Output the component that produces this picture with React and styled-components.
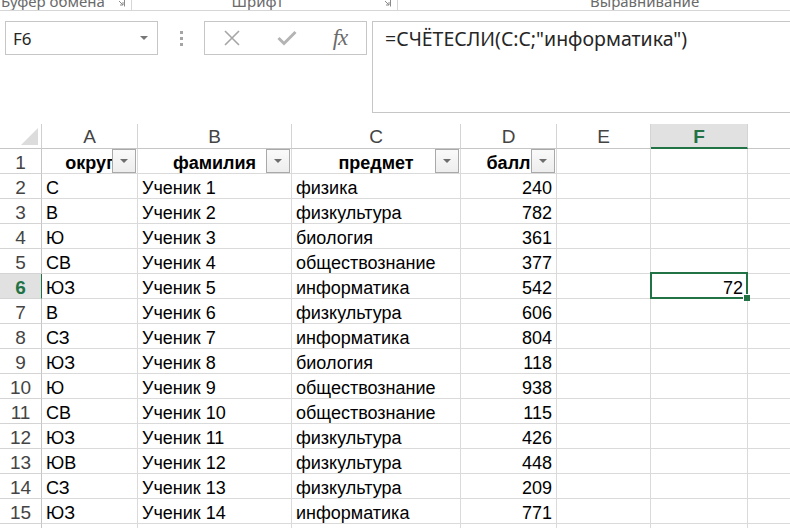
import React from 'react';
import styled, { createGlobalStyle } from 'styled-components';

const GlobalStyle = createGlobalStyle`
  html, body {
    margin: 0;
    padding: 0;
    background: #fff;
  }
  body {
    font-family: "Liberation Sans", Arial, sans-serif;
  }
`;

const Page = styled.div`
  width: 790px;
  height: 528px;
  overflow: hidden;
  background: #fff;
`;

// ribbon group captions, cut off at the top
const Ribbon = styled.div`
  display: flex;
  height: 10px;
  border-bottom: 1px solid #d6d6d6;
  overflow: hidden;
`;

const RibbonGroup = styled.div`
  position: relative;
  width: ${p => p.w}px;
  flex: none;
  display: flex;
  justify-content: ${p => p.align || 'center'};
  padding: ${p => p.pad || '0 14px 0 0'};
  box-sizing: border-box;
  border-right: ${p => (p.last ? 'none' : '1px solid #d6d6d6')};
`;

const RibbonLabel = styled.span`
  margin-top: -8px;
  font-family: "Noto Sans", "Open Sans", sans-serif;
  font-size: 15px;
  line-height: 18px;
  color: #6a6a6a;
  white-space: nowrap;
`;

const Launcher = styled.svg`
  position: absolute;
  right: 6px;
  top: -2px;
`;

const FormulaBar = styled.div`
  display: flex;
  align-items: flex-start;
  height: 102px;
  padding-top: 10px;
  box-sizing: border-box;
`;

const NameBox = styled.div`
  margin-left: 5px;
  width: 153px;
  height: 34px;
  box-sizing: border-box;
  border: 1px solid #c6c6c6;
  display: flex;
  align-items: center;
  justify-content: space-between;
  padding: 0 9px 0 7px;
  font-family: "Noto Sans", "Open Sans", sans-serif;
  font-size: 17px;
  color: #262626;
`;

const Caret = styled.span`
  width: 0;
  height: 0;
  border-left: 4px solid transparent;
  border-right: 4px solid transparent;
  border-top: 4px solid #777;
`;

const Grip = styled.div`
  width: 3px;
  margin: 10px 21px 0 22px;
  display: flex;
  flex-direction: column;
  gap: 3px;
  height: 15px;
  span {
    width: 3px;
    height: 3px;
    background: #a5a5a5;
  }
`;

const ActionBox = styled.div`
  width: 163px;
  height: 34px;
  box-sizing: border-box;
  border: 1px solid #c6c6c6;
  display: flex;
  align-items: center;
  padding-left: 8px;
`;

const ActionSlot = styled.div`
  width: ${p => p.w}px;
  flex: none;
  display: flex;
  align-items: center;
  justify-content: center;
`;

const Fx = styled.span`
  font-family: "Liberation Serif", "Times New Roman", serif;
  font-style: italic;
  font-size: 23px;
  color: #6b6b6b;
  letter-spacing: -1px;
`;

const FormulaInput = styled.div`
  margin-left: 5px;
  flex: 1;
  height: 92px;
  box-sizing: border-box;
  border-left: 1px solid #c6c6c6;
  border-top: 1px solid #c6c6c6;
  border-bottom: 1px solid #c6c6c6;
  padding: 4px 0 0 12px;
  font-family: "Noto Sans", "Open Sans", sans-serif;
  font-size: 19.5px;
  line-height: 26px;
  color: #262626;
  white-space: nowrap;
`;

const Sheet = styled.div`
  margin-top: 11px;
  display: grid;
  grid-template-columns: 42px 96px 154px 169px 96px 94px 97px 120px;
  grid-template-rows: 25px;
  grid-auto-rows: 25px;
  font-size: 18px;
  color: #000;
`;

const Corner = styled.div`
  position: relative;
  border-right: 1px solid #d0d0d0;
  border-bottom: 1px solid #c6c6c6;
  &::after {
    content: '';
    position: absolute;
    right: 3px;
    bottom: 3px;
    width: 0;
    height: 0;
    border-left: 17px solid transparent;
    border-bottom: 17px solid #dcdcdc;
  }
`;

const ColHead = styled.div`
  display: flex;
  align-items: center;
  justify-content: center;
  border-right: 1px solid #d4d4d4;
  border-bottom: ${p => (p.active ? '2px solid #217346' : '1px solid #c6c6c6')};
  background: ${p => (p.active ? '#e1e1e1' : '#fff')};
  color: ${p => (p.active ? '#217346' : '#444')};
  font-weight: ${p => (p.active ? 'bold' : 'normal')};
  font-size: 19px;
  padding-top: 2px;
  box-sizing: border-box;
`;

const RowHead = styled.div`
  display: flex;
  align-items: center;
  justify-content: center;
  padding-top: 4px;
  border-right: 1px solid ${p => (p.active ? '#217346' : '#c6c6c6')};
  border-bottom: 1px solid #d4d4d4;
  background: ${p => (p.active ? '#e1e1e1' : '#fff')};
  color: ${p => (p.active ? '#217346' : '#444')};
  font-weight: ${p => (p.active ? 'bold' : 'normal')};
  font-size: 19px;
  box-sizing: border-box;
`;

const Cell = styled.div`
  position: relative;
  display: flex;
  align-items: center;
  justify-content: ${p => (p.num ? 'flex-end' : 'flex-start')};
  padding: 4px 4px 0;
  border-right: 1px solid #dadada;
  border-bottom: 1px solid #dadada;
  white-space: nowrap;
  overflow: hidden;
  box-sizing: border-box;
`;

const HeaderCell = styled(Cell)`
  justify-content: center;
  font-weight: bold;
  overflow: visible;
`;

const HeaderText = styled.span`
  overflow: hidden;
  white-space: nowrap;
`;

const FilterButton = styled.div`
  position: absolute;
  right: 1px;
  top: 0;
  width: 24px;
  height: 24px;
  box-sizing: border-box;
  border: 1px solid #a9a9a9;
  background: linear-gradient(#fafafa, #ededed);
  display: flex;
  align-items: center;
  justify-content: center;
  &::after {
    content: '';
    width: 0;
    height: 0;
    border-left: 4px solid transparent;
    border-right: 4px solid transparent;
    border-top: 4px solid #6d6d6d;
  }
`;

const Selection = styled.div`
  position: absolute;
  left: -1px;
  top: -2px;
  right: -1px;
  bottom: -1px;
  border: 2px solid #217346;
  pointer-events: none;
  &::after {
    content: '';
    position: absolute;
    right: -4px;
    bottom: -4px;
    width: 6px;
    height: 6px;
    background: #217346;
    border: 1px solid #fff;
    border-right: none;
    border-bottom: none;
  }
`;

const SelectedCell = styled(Cell)`
  overflow: visible;
  z-index: 1;
`;

const columns = ['A', 'B', 'C', 'D', 'E', 'F', 'G'];

const headers = ['округ', 'фамилия', 'предмет', 'балл'];

const rows = [
  ['С', 'Ученик 1', 'физика', 240],
  ['В', 'Ученик 2', 'физкультура', 782],
  ['Ю', 'Ученик 3', 'биология', 361],
  ['СВ', 'Ученик 4', 'обществознание', 377],
  ['ЮЗ', 'Ученик 5', 'информатика', 542],
  ['В', 'Ученик 6', 'физкультура', 606],
  ['СЗ', 'Ученик 7', 'информатика', 804],
  ['ЮЗ', 'Ученик 8', 'биология', 118],
  ['Ю', 'Ученик 9', 'обществознание', 938],
  ['СВ', 'Ученик 10', 'обществознание', 115],
  ['ЮЗ', 'Ученик 11', 'физкультура', 426],
  ['ЮВ', 'Ученик 12', 'физкультура', 448],
  ['СЗ', 'Ученик 13', 'физкультура', 209],
  ['ЮЗ', 'Ученик 14', 'информатика', 771],
];

const LauncherIcon = () => (
  <Launcher width="9" height="9" viewBox="0 0 9 9">
    <path d="M0.5 0.5 H8.5 V8.5" fill="none" stroke="#8a8a8a" strokeWidth="1" />
    <path d="M3 3 L7 7 M4 7 H7 V4" fill="none" stroke="#8a8a8a" strokeWidth="1" />
  </Launcher>
);

function App() {
  const activeRow = 6;
  const activeCol = 'F';

  return (
    <Page>
      <GlobalStyle />
      <Ribbon>
        <RibbonGroup w={132} align="flex-start" pad="0 0 0 1px">
          <RibbonLabel>Буфер обмена</RibbonLabel>
          <LauncherIcon />
        </RibbonGroup>
        <RibbonGroup w={266}>
          <RibbonLabel>Шрифт</RibbonLabel>
          <LauncherIcon />
        </RibbonGroup>
        <RibbonGroup w={392} align="flex-start" pad="0 0 0 192px" last>
          <RibbonLabel>Выравнивание</RibbonLabel>
        </RibbonGroup>
      </Ribbon>

      <FormulaBar>
        <NameBox>
          <span>F6</span>
          <Caret />
        </NameBox>
        <Grip>
          <span />
          <span />
          <span />
        </Grip>
        <ActionBox>
          <ActionSlot w={38}>
            <svg width="18" height="18" viewBox="0 0 18 18">
              <path d="M2 2 L16 16 M16 2 L2 16" stroke="#a6a6a6" strokeWidth="1.6" fill="none" />
            </svg>
          </ActionSlot>
          <ActionSlot w={72}>
            <svg width="20" height="16" viewBox="0 0 20 16">
              <path d="M1.5 8 L7 13.5 L18.5 2" stroke="#b4b4b4" strokeWidth="3" fill="none" />
            </svg>
          </ActionSlot>
          <ActionSlot w={34}>
            <Fx>fx</Fx>
          </ActionSlot>
        </ActionBox>
        <FormulaInput>=СЧЁТЕСЛИ(C:C;"информатика")</FormulaInput>
      </FormulaBar>

      <Sheet>
        <Corner />
        {columns.map(c => (
          <ColHead key={c} active={c === activeCol}>
            {c}
          </ColHead>
        ))}

        <RowHead>1</RowHead>
        {headers.map(h => (
          <HeaderCell key={h}>
            <HeaderText>{h}</HeaderText>
            <FilterButton />
          </HeaderCell>
        ))}
        <Cell />
        <Cell />
        <Cell />

        {rows.map((r, i) => {
          const n = i + 2;
          const active = n === activeRow;
          return (
            <React.Fragment key={n}>
              <RowHead active={active}>{n}</RowHead>
              <Cell>{r[0]}</Cell>
              <Cell>{r[1]}</Cell>
              <Cell>{r[2]}</Cell>
              <Cell num>{r[3]}</Cell>
              <Cell />
              {active ? (
                <SelectedCell num>
                  72
                  <Selection />
                </SelectedCell>
              ) : (
                <Cell />
              )}
              <Cell />
            </React.Fragment>
          );
        })}

        <RowHead>16</RowHead>
        {columns.map(c => (
          <Cell key={c} />
        ))}
      </Sheet>
    </Page>
  );
}

export default App;
